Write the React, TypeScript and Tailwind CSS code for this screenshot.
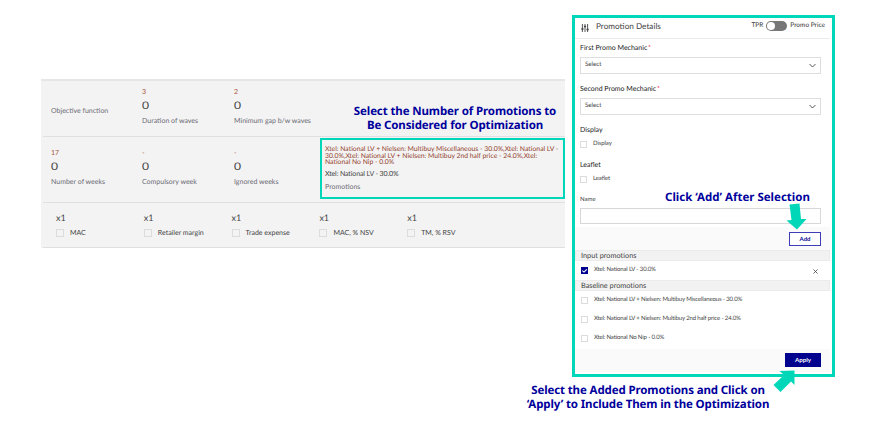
import type { ReactNode } from "react";

const LATO = "font-['Lato','Liberation_Sans',sans-serif]";
const OPEN = "font-['Noto_Sans','Open_Sans',sans-serif]";

function Box({ checked = false, className = "size-[7px]" }: { checked?: boolean; className?: string }) {
  if (checked) {
    return (
      <span className="flex size-[7px] shrink-0 items-center justify-center bg-[#00008f]">
        <svg viewBox="0 0 7 7" className="size-[7px]" fill="none" stroke="white" strokeWidth="1.1">
          <path d="M1.3 3.6 3 5.1 5.8 2.3" />
        </svg>
      </span>
    );
  }
  return <span className={`${className} shrink-0 border border-[#dcdcdc] bg-transparent`} />;
}

function Metric({ top, label }: { top: string; label: string }) {
  return (
    <div className="flex flex-col whitespace-nowrap">
      <span className="h-3 text-[7px] leading-[13px] text-[#a8553c]">{top}</span>
      <span className="h-[14px] w-[6px] origin-left scale-x-115 text-[10.5px] leading-4 text-[#444]">0</span>
      <span className="mt-[3px] h-3 text-[7px] leading-[13px] text-[#6c6c76]">{label}</span>
    </div>
  );
}

function Weight({ label }: { label: string }) {
  return (
    <div className="flex w-[87.8px] flex-col whitespace-nowrap">
      <span className="h-3 text-[9px] leading-3 text-[#444]">x1</span>
      <span className="mt-[3px] flex h-3 items-center">
        <Box className="size-2" />
        <span className="ml-[6px] text-[7px] leading-3 text-[#444]">{label}</span>
      </span>
    </div>
  );
}

function OptimizationTable() {
  return (
    <section className={`mt-[79px] h-[169px] w-[524px] shrink-0 border-t-2 border-[#e6e6e9] bg-[#f3f3f3] ${LATO}`}>
      <div className="ml-[2px] flex h-[56px] border-b border-[#e0e0e2] pt-[5px] pl-2">
        <span className="mt-[19px] w-[91px] text-[7px] leading-3 text-[#6c6c76]">Objective function</span>
        <div className="w-[92px]"><Metric top="3" label="Duration of waves" /></div>
        <Metric top="2" label="Minimum gap b/w waves" />
      </div>
      <div className="ml-[2px] flex h-[66px] border-b border-[#e0e0e2] pl-2">
        <div className="w-[91px] pt-[10px]"><Metric top="17" label="Number of weeks" /></div>
        <div className="w-[92px] pt-[10px]"><Metric top="-" label="Compulsory week" /></div>
        <div className="w-[86px] pt-[10px]"><Metric top="-" label="Ignored weeks" /></div>
        <div className="mt-px flex h-[61px] w-[245px] flex-col border-2 border-[#00d7b9] pt-[6px] pl-[3px] text-[7px] whitespace-nowrap">
          <p className="text-[6.8px] leading-[6.5px] text-[#94432e]">
            <span className="block">Xtel: National LV + Nielsen: Multibuy Miscellaneous - 30.0%,Xtel: National LV -</span>
            <span className="block">30.0%,Xtel: National LV + Nielsen: Multibuy 2nd half price - 24.0%,Xtel:</span>
            <span className="block">National No Nip - 0.0%</span>
          </p>
          <span className="mt-[2px] leading-[13px] text-[#444] tracking-[-0.12px]">Xtel: National LV - 30.0%</span>
          <span className="leading-[13px] text-[#6c6c76]">Promotions</span>
        </div>
      </div>
      <div className="ml-[2px] flex h-[45px] border-b border-[#dfdfe1] pt-[9px] pl-[13px]">
        <Weight label="MAC" />
        <Weight label="Retailer margin" />
        <Weight label="Trade expense" />
        <Weight label="MAC, % NSV" />
        <Weight label="TM, % RSV" />
      </div>
    </section>
  );
}

function SelectField({ label, className = "" }: { label: string; className?: string }) {
  return (
    <div className={`mr-[11px] ml-[5px] ${className}`}>
      <div className="h-3 text-[7px] leading-[13px] text-[#222]">
        {label} <span className="-ml-px text-red-500">*</span>
      </div>
      <div className="mt-[3px] flex h-[17px] items-center justify-between border border-[#dedede] pr-1 pl-1">
        <span className="-mt-px text-[6.2px] leading-3 text-[#444]">Select</span>
        <svg viewBox="0 0 7 5" className="h-[5px] w-[7px]" fill="none" stroke="#444" strokeWidth="0.9">
          <path d="M.5 1 3.5 4 6.5 1" />
        </svg>
      </div>
    </div>
  );
}

function Option({ children, checked = false }: { children: ReactNode; checked?: boolean }) {
  return (
    <div className="flex h-[19px] items-center pl-[6px]">
      <Box checked={checked} />
      <span className="-mt-[2px] ml-[6px] text-[6px] leading-3 tracking-[-0.15px] whitespace-nowrap text-[#444]">{children}</span>
    </div>
  );
}

function PromotionPanel() {
  return (
    <section className={`mt-[15px] ml-[7px] h-[362px] w-[263px] shrink-0 border-[3px] border-[#00d7b9] bg-white ${LATO}`}>
      <header className="mr-[2px] flex h-[21px] items-center border-b border-[#ebebeb] pl-[6px] whitespace-nowrap">
        <svg viewBox="0 0 8 8" className="size-2" fill="none" stroke="#444" strokeWidth="0.9">
          <path d="M1.4 0v8M4 0v8M6.6 0v8" />
          <path d="M.3 5h2.2M2.9 2.5h2.2M5.5 5.5h2.2" strokeWidth="1.3" />
        </svg>
        <span className="-mt-[5px] ml-[7px] text-[8.2px] leading-3 text-[#444]">Promotion Details</span>
        <span className="-mt-[5px] ml-auto text-[6.5px] leading-3 text-[#333]">TPR</span>
        <span className="-mt-[5px] ml-[3px] flex h-[10px] w-[21px] items-center rounded-full bg-[#777] p-px">
          <span className="size-2 rounded-full bg-white" />
        </span>
        <span className="-mt-[5px] mr-[5px] ml-[3px] text-[6.5px] leading-3 text-[#333]">Promo Price</span>
      </header>
      <SelectField label="First Promo Mechanic" className="mt-[3px]" />
      <SelectField label="Second Promo Mechanic" className="mt-[9px]" />
      <div className="mt-[9px] h-3 pl-[5px] text-[7px] leading-[13px] text-[#222]">Display</div>
      <div className="mt-[2px] flex h-3 items-center pl-[5px]">
        <Box />
        <span className="ml-[6px] text-[6px] leading-3 tracking-[-0.1px] text-[#444]">Display</span>
      </div>
      <div className="mt-[9px] h-3 pl-[5px] text-[7px] leading-[13px] text-[#222]">Leaflet</div>
      <div className="mt-[2px] flex h-3 items-center pl-[5px]">
        <Box />
        <span className="ml-[6px] text-[6px] leading-3 tracking-[-0.1px] text-[#444]">Leaflet</span>
      </div>
      <div className="mt-[8px] h-3 pl-[5px] text-[6px] leading-[14px] text-[#444]">Name</div>
      <div className="mt-[3px] mr-[11px] ml-[5px] h-4 border border-[#d8d8d8]" />
      <div className="mt-[3px] mr-[2px] flex h-[23px] justify-end bg-[#fafafa] pt-[5px] pr-[9px]">
        <button className="flex h-[14px] w-8 justify-center border border-[#3d3db5] bg-white text-[6px] leading-[11px] font-bold text-[#00008f]">Add</button>
      </div>
      <div className="mr-[2px] h-[11px] border border-[#ebebeb] bg-[#f2f2f2] pl-[5px] text-[7.3px] leading-[9px] text-[#444]">Input promotions</div>
      <div className="flex items-center justify-between pr-[14px]">
        <Option checked>Xtel: National LV - 30.0%</Option>
        <svg viewBox="0 0 5 5" className="mt-[2px] size-[5px]" stroke="#444" strokeWidth="0.8">
          <path d="M.5.5 4.5 4.5M4.5.5.5 4.5" />
        </svg>
      </div>
      <div className="mr-[2px] h-[11px] border border-[#ebebeb] bg-[#f2f2f2] pl-[5px] text-[7.3px] leading-[9px] text-[#444]">Baseline promotions</div>
      <Option>Xtel: National LV + Nielsen: Multibuy Miscellaneous - 30.0%</Option>
      <Option>Xtel: National LV + Nielsen: Multibuy 2nd half price - 24.0%</Option>
      <Option>Xtel: National No Nip - 0.0%</Option>
      <div className="mt-px mr-[2px] flex h-[23px] justify-end bg-[#fafafa] pt-1 pr-[9px]">
        <button className="flex h-[14px] w-9 justify-center bg-[#00008f] text-[6.2px] leading-[13px] font-bold text-white">Apply</button>
      </div>
    </section>
  );
}

function Note({ children, className }: { children: ReactNode; className: string }) {
  return (
    <p className={`absolute text-center text-[11.5px] leading-[14px] font-bold whitespace-nowrap text-[#00009c] ${OPEN} ${className}`}>
      {children}
    </p>
  );
}

export default function App() {
  return (
    <main className="relative flex h-[443px] w-[877px] items-start overflow-hidden bg-white pl-[41px] [text-rendering:geometricPrecision]">
      <OptimizationTable />
      <PromotionPanel />
      <Note className="top-[105px] left-[335px] w-[240px] tracking-[-0.12px]">
        Select the Number of Promotions to
        <br />
        Be Considered for Optimization
      </Note>
      <Note className="top-[191px] left-[640px] w-[195px]">Click ‘Add’ After Selection</Note>
      <Note className="top-[384px] left-[518px] w-[260px] tracking-[-0.12px]">
        Select the Added Promotions and Click on
        <br />
        ‘Apply’ to Include Them in the Optimization
      </Note>
      <svg viewBox="0 0 21 27" className="absolute top-[203px] left-[786px] h-[27px] w-[21px]" fill="#00d7b9">
        <path d="M3.500 1.500 13.500.5 15 16h5.500L11 26.500.5 17.500l5-.5Z" />
      </svg>
      <svg viewBox="0 0 24 24" className="absolute top-[369px] left-[772px] size-6" fill="#00d7b9">
        <path d="M7.500 2 22.500 1.500 22.500 16 19 12.500 8.500 23 1.500 16 12 6Z" />
      </svg>
    </main>
  );
}
